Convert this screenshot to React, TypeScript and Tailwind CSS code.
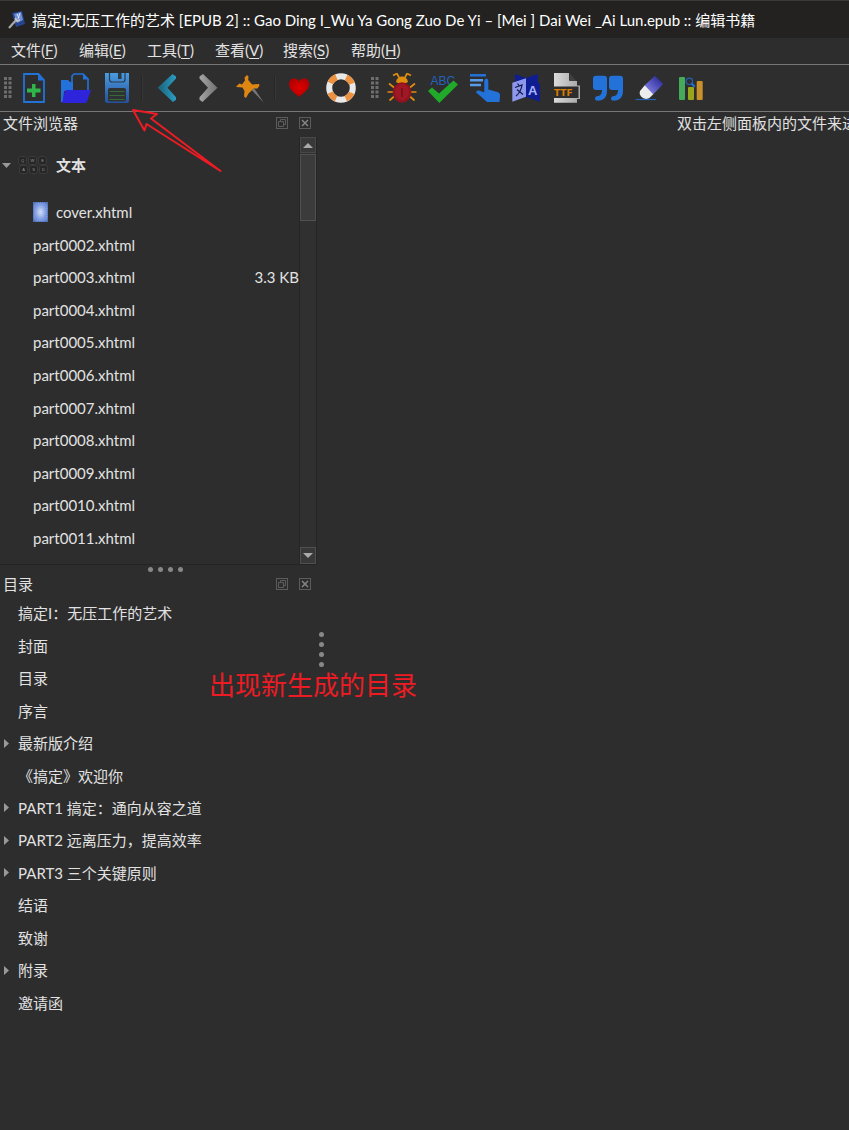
/**
 * Book editor window - menus, toolbars, file browser and table of contents
 */

import type { ReactNode } from 'react';

const MENUS = [
  { label: '文件', hotkey: 'F' },
  { label: '编辑', hotkey: 'E' },
  { label: '工具', hotkey: 'T' },
  { label: '查看', hotkey: 'V' },
  { label: '搜索', hotkey: 'S' },
  { label: '帮助', hotkey: 'H' },
];

const FILES = [
  { name: 'cover.xhtml', cover: true },
  { name: 'part0002.xhtml' },
  { name: 'part0003.xhtml', size: '3.3 KB' },
  { name: 'part0004.xhtml' },
  { name: 'part0005.xhtml' },
  { name: 'part0006.xhtml' },
  { name: 'part0007.xhtml' },
  { name: 'part0008.xhtml' },
  { name: 'part0009.xhtml' },
  { name: 'part0010.xhtml' },
  { name: 'part0011.xhtml' },
];

const TOC = [
  { title: '搞定I：无压工作的艺术' },
  { title: '封面' },
  { title: '目录' },
  { title: '序言' },
  { title: '最新版介绍', children: true },
  { title: '《搞定》欢迎你' },
  { title: 'PART1 搞定：通向从容之道', children: true },
  { title: 'PART2 远离压力，提高效率', children: true },
  { title: 'PART3 三个关键原则', children: true },
  { title: '结语' },
  { title: '致谢' },
  { title: '附录', children: true },
  { title: '邀请函' },
];

function Tool({ label, children }: { label: string; children: ReactNode }) {
  return (
    <button type="button" aria-label={label} className="h-[30px] w-[30px] shrink-0">
      <svg viewBox="0 0 30 30" className="block h-[30px] w-[30px]">
        {children}
      </svg>
    </button>
  );
}

function Grip() {
  return (
    <svg viewBox="0 0 8 22" className="h-[22px] w-2 shrink-0" fill="#6e6e6e">
      {[0, 4.5, 9, 13.5, 18].map((y) => (
        <g key={y}>
          <rect x="0" y={y} width="3" height="3" />
          <rect x="4.5" y={y} width="3" height="3" />
        </g>
      ))}
    </svg>
  );
}

function ToolSeparator() {
  return <div className="h-6 w-0.5 shrink-0 border-l border-[#262626] bg-[#373737]" />;
}

function PanelHeader({ title }: { title: string }) {
  return (
    <div className="flex h-[22px] items-center pr-1.5 pl-[3px]">
      <h2 className="flex-1 text-[15px]">{title}</h2>
      <button type="button" aria-label={`浮动 ${title}`} className="mr-[11px]">
        <svg viewBox="0 0 12 12" className="block h-3 w-3" fill="none" stroke="#5c5c5c">
          <rect x="0.5" y="0.5" width="11" height="11" />
          <path d="M4.5 4.5V2.5h5v5h-2M2.5 4.5h5v5h-5z" />
        </svg>
      </button>
      <button type="button" aria-label={`关闭 ${title}`}>
        <svg viewBox="0 0 12 12" className="block h-3 w-3" fill="none" stroke="#5c5c5c">
          <rect x="0.5" y="0.5" width="11" height="11" />
          <path d="M3 3l6 6M9 3l-6 6" stroke="#858585" strokeWidth="1.5" />
        </svg>
      </button>
    </div>
  );
}

function SplitterDots() {
  return (
    <>
      {Array.from({ length: 4 }).map((_, i) => (
        <span key={i} className="h-[5px] w-[5px] rounded-full bg-[#888]" />
      ))}
    </>
  );
}

function TitleBar() {
  return (
    <header className="flex h-[38px] items-center border-t border-[#3a3a3a] bg-[#232221] pl-2">
      <svg viewBox="0 0 18 18" className="mr-1.5 h-[18px] w-[18px] shrink-0">
        <path d="M4 2l10-2 3 13-9 3z" fill="#27458f" />
        <path d="M6 3l7-2 2 8-6 3z" fill="#6d8fd6" />
        <path d="M9 3l2 4M12 2l-2 6" stroke="#dbe4f7" strokeWidth="1" />
        <path d="M1 17L9 8" stroke="#a9a9a9" strokeWidth="2.2" />
        <path d="M7 7l2 3 3-1" fill="none" stroke="#c8c8c8" strokeWidth="1.5" />
      </svg>
      <h1 className="truncate text-[15px] text-white">
        搞定I:无压工作的艺术 [EPUB 2] :: Gao Ding I_Wu Ya Gong Zuo De Yi – [Mei ] Dai Wei _Ai Lun.epub :: 编辑书籍
      </h1>
    </header>
  );
}

function MenuBar() {
  return (
    <nav className="flex h-[26px] items-center pb-0.5 pl-[11px]">
      {MENUS.map((menu) => (
        <button key={menu.hotkey} type="button" className="w-[68px] text-left text-[15px] whitespace-nowrap">
          {menu.label}(<span className="underline underline-offset-2">{menu.hotkey}</span>)
        </button>
      ))}
    </nav>
  );
}

function Toolbars() {
  return (
    <div className="flex h-12 items-center border-y border-[#777] bg-[#2e2e2e] pl-1">
      <Grip />
      <div className="ml-[7px] flex w-[113px] shrink-0 justify-between">
        <Tool label="新建文件">
          <path d="M5 1h14.5l5.5 6v22H5z" fill="none" stroke="#2372d9" strokeWidth="1.8" />
          <path d="M19 1v6.5h6z" fill="#2372d9" />
          <path d="M13 11h3.5v4.5h5v4h-5V24H13v-4.500H8v-4h5z" fill="#2fb54a" />
        </Tool>
        <Tool label="打开书籍">
          <path d="M0 7h7l2 2h3v9H3l-1 11H0z" fill="#2372d9" />
          <path d="M11 18V3l2-2h9l5 5v12" fill="none" stroke="#2372d9" strokeWidth="1.6" />
          <path d="M22 0v6.5h6z" fill="#2372d9" />
          <path d="M5 17h25l-4 11.500q-.5 1.500-2 1.500H1l3-12z" fill="#2e24dc" />
        </Tool>
        <Tool label="保存">
          <defs>
            <linearGradient id="save" x1="0" y1="0" x2="0" y2="1">
              <stop offset="0" stopColor="#4a9ce0" />
              <stop offset="1" stopColor="#24509a" />
            </linearGradient>
          </defs>
          <path d="M3 0H27V28q0 2-2 2H5q-2 0-2-2z" fill="url(#save)" />
          <path d="M7.5 0v6.5q0 2.500 2.500 2.500h10.500q2.500 0 2.500-2.500V0" fill="none" stroke="#2b3a49" strokeWidth="1.2" />
          <rect x="16" y="0" width="3.5" height="6" fill="#2b3a49" />
          <rect x="6" y="15" width="18" height="13.5" rx="2" fill="#2e3234" />
          <path d="M7.500 18.500h15M7.500 22.500h15M7.500 26.500h15" stroke="#356b33" />
        </Tool>
      </div>
      <div className="flex w-5 shrink-0 justify-center">
        <ToolSeparator />
      </div>
      <div className="flex w-[113px] shrink-0 justify-between">
        <Tool label="后退">
          <defs>
            <linearGradient id="back">
              <stop offset="0" stopColor="#1b6276" />
              <stop offset="1" stopColor="#2b9cc4" />
            </linearGradient>
          </defs>
          <path d="M5.700 14.700L20.500 1l3.500 2.500v2l-8.500 9.200 8.500 9.500v2.500L21 29z" fill="url(#back)" />
        </Tool>
        <Tool label="前进">
          <defs>
            <linearGradient id="forward">
              <stop offset="0" stopColor="#a5a5a5" />
              <stop offset="1" stopColor="#707070" />
            </linearGradient>
          </defs>
          <path d="M23.500 14.700L9 1L5.500 3.500v2l8.500 9.200-8.500 9.500v2.500L8.500 29z" fill="url(#forward)" />
        </Tool>
        <Tool label="固定">
          <path d="M16.500 17l2.500-2 9.700 14.500z" fill="#777" />
          <path
            d="M12 2l1.500 1.500-.3 3.500 4 4.500 6.800-.5.500 1.500-2 3h-4l-5 5-2.500 4.500-2-1.500.5-5.500-2-3.500-6-.5v-1L4.500 10.500l2.500 1 3-4-.5-3z"
            fill="#dd8612"
          />
        </Tool>
      </div>
      <div className="flex w-[19px] shrink-0 justify-center">
        <ToolSeparator />
      </div>
      <div className="flex w-[72px] shrink-0 justify-between">
        <Tool label="捐助">
          <defs>
            <radialGradient id="heart">
              <stop offset="0" stopColor="#e00000" />
              <stop offset="1" stopColor="#b40000" />
            </radialGradient>
          </defs>
          <path d="M15 24C11 20 5 17 5 11c0-3.500 2.500-5.500 5-5.500 2.300 0 4 1.300 5 3 1-1.700 2.700-3 5-3 2.800 0 5.300 2 5.300 5.500C25.300 17 19 20 15 24z" fill="url(#heart)" />
        </Tool>
        <Tool label="用户手册">
          <circle cx="15" cy="15" r="11.8" fill="none" stroke="#e8e8e8" strokeWidth="6" />
          <circle
            cx="15"
            cy="15"
            r="11.8"
            fill="none"
            stroke="#ec9140"
            strokeWidth="6"
            strokeDasharray="8.5 10.035"
            strokeDashoffset="-5"
          />
        </Tool>
      </div>
      <div className="ml-[15px] shrink-0">
        <Grip />
      </div>
      <div className="ml-2 flex w-[319px] shrink-0 justify-between">
        <Tool label="检查书籍">
          <g fill="none" stroke="#df8d0c" strokeWidth="1.7">
            <path d="M6 2.500l4-2 2 4M24 2.500l-4-2-2 4" />
            <path d="M7 14.500L2 10.500M23 14.500L28 10.500M6 19H.5M24 19h5.500M7 23.500l-4.500 4M23 23.500l4.500 4" />
          </g>
          <path d="M9 9q1-5.500 6-5.500T21 9q-6 4-12 0z" fill="#df8d0c" />
          <ellipse cx="15" cy="19.5" rx="9.3" ry="10.3" fill="#8f1420" />
          <ellipse cx="15" cy="19" rx="7" ry="8" fill="#a01824" />
          <path d="M15 15v9" stroke="#5d1016" strokeWidth="1.2" />
        </Tool>
        <Tool label="拼写检查">
          <text x="2.5" y="11.5" fontSize="12" fill="#2463ba" fontFamily="Liberation Sans, sans-serif">
            ABC
          </text>
          <path d="M0 18l4-3.500 7 6L25.500 7.500l4.500 4L11.300 30z" fill="#21a929" />
        </Tool>
        <Tool label="目录编辑">
          <path d="M0 2.300h16" stroke="#2372d9" strokeWidth="2.5" />
          <path d="M0 7.300h13M0 12h11" stroke="#5a9be9" strokeWidth="2.5" />
          <path
            d="M16.300 5.500q2 0 2 2.500v8.500l9 2.500q3 1 2.700 3.500L29.500 29H17l-5.500-5-5.500-4.500q0-2.500 3-2l5.300 2V8q0-2.500 2-2.500z"
            fill="#2372d9"
          />
        </Tool>
        <Tool label="翻译">
          <path d="M4 1l11 4v19L4 22z" fill="#101d91" />
          <path d="M15 5l12-4v9l2 .5V28.700L15 24z" fill="#101d91" />
          <path d="M1.300 9.700L15 5.300v18.400L1.300 28.700z" fill="#8d98ec" />
          <path d="M4 14.500l7-2.500q-1 7-6 11M6 16.500l6 5M6.500 10.500l1.500 2" fill="none" stroke="#11194a" strokeWidth="1.2" />
          <text x="17" y="22" fontSize="13" fontWeight="700" fill="#a9b3ff" fontFamily="Liberation Sans, sans-serif">
            A
          </text>
        </Tool>
        <Tool label="管理字体">
          <defs>
            <linearGradient id="page">
              <stop offset="0" stopColor="#dadada" />
              <stop offset="1" stopColor="#a5a5a5" />
            </linearGradient>
          </defs>
          <path d="M2 0h15v7l1 1h7v4.500h3V26h-3v3.700H2z" fill="url(#page)" />
          <path d="M17.500 0l7 8h-7z" fill="#404040" />
          <rect x="2" y="13.500" width="24.500" height="11.500" fill="#2d2d2d" />
          <text x="2" y="22.5" fontSize="9" fontWeight="700" fill="#d97b00" fontFamily="DejaVu Sans, sans-serif">
            TTF
          </text>
        </Tool>
        <Tool label="智能标点">
          <path
            d="M3 2.700h8q3 0 3 3V18q0 9.500-9 9.700-3 0-3-2.200t3-2.500q4-.5 4-6H3q-3 0-3-3V5.700q0-3 3-3zM19 2.700h8q3 0 3 3V18q0 9.500-9 9.700-3 0-3-2.200t3-2.500q4-.5 4-6h-6q-3 0-3-3V5.700q0-3 3-3z"
            fill="#2372d9"
          />
        </Tool>
        <Tool label="移除未使用的样式">
          <defs>
            <linearGradient id="rubber" x1="0" y1="1" x2="1" y2="0">
              <stop offset="0.1" stopColor="#8484e6" />
              <stop offset="0.9" stopColor="#262596" />
            </linearGradient>
          </defs>
          <path d="M10 12l8.500 9-3.500 3.500Q12 27 8 25q-4.500-3-3-7z" fill="#ececec" />
          <path d="M20 2.700l8.300 8.300-10 10.200-8.700-8.900z" fill="url(#rubber)" />
          <path d="M.7 26.500H21" stroke="#2463ba" strokeWidth="1.2" />
        </Tool>
        <Tool label="报告">
          <rect x="3" y="4" width="6" height="23" rx="1" fill="#45ab5b" />
          <rect x="12" y="14" width="6" height="13" rx="1" fill="#99a51b" />
          <rect x="20.7" y="8" width="6" height="19" rx="1" fill="#ca9029" />
          <circle cx="13.3" cy="8.3" r="3.2" fill="none" stroke="#2463ba" strokeWidth="1.2" />
          <path d="M15.500 10.500l3.300 3.300" stroke="#2372d9" strokeWidth="2" />
        </Tool>
      </div>
    </div>
  );
}

function KeyboardIcon() {
  return (
    <svg viewBox="0 0 30 20" className="h-5 w-[30px] shrink-0" fontSize="4" fontFamily="Liberation Sans, sans-serif">
      {['Q', 'W', 'E', 'A', 'S', 'D'].map((key, i) => {
        const x = (i % 3) * 10 + (i > 2 ? 1 : 0);
        const y = i > 2 ? 10 : 1;
        return (
          <g key={key}>
            <rect x={x + 0.5} y={y + 0.5} width="8" height="8" rx="2" fill="#262626" stroke="#3c3c3c" />
            <text x={x + 4.5} y={y + 5.5} textAnchor="middle" fill="#999">
              {key}
            </text>
          </g>
        );
      })}
    </svg>
  );
}

function CoverIcon() {
  return (
    <svg viewBox="0 0 15 20" className="mr-2 h-5 w-[15px] shrink-0">
      <defs>
        <radialGradient id="cover">
          <stop offset="0.1" stopColor="#cbd6f6" />
          <stop offset="1" stopColor="#6f90dc" />
        </radialGradient>
      </defs>
      <rect width="15" height="20" fill="#5474b8" />
      <rect x="1" y="1" width="13" height="18" rx="4" fill="url(#cover)" stroke="#89a4e4" strokeDasharray="1 1" />
    </svg>
  );
}

function Scrollbar() {
  return (
    <div className="flex w-[18px] flex-col border-x border-[#252525] bg-[#303030]">
      <button type="button" aria-label="向上滚动" className="flex h-4 items-center justify-center border border-[#484848] bg-[#383838]">
        <svg viewBox="0 0 10 5" className="h-[5px] w-2.5" fill="#aaa">
          <path d="M5 0l5 5H0z" />
        </svg>
      </button>
      <div className="mt-px h-[67px] border border-[#505050] bg-[#3b3b3b]" />
      <div className="flex-1" />
      <button type="button" aria-label="向下滚动" className="flex h-[17px] items-center justify-center border border-[#505050] bg-[#383838]">
        <svg viewBox="0 0 10 5" className="h-[5px] w-2.5" fill="#aaa">
          <path d="M5 5L0 0h10z" />
        </svg>
      </button>
    </div>
  );
}

function FileBrowser() {
  return (
    <section>
      <PanelHeader title="文件浏览器" />
      <div className="mt-[3px] flex h-[428px] border-b border-[#232323]">
        <div className="min-w-0 flex-1">
          <button type="button" className="mb-[3px] flex h-14 w-full items-center pl-0.5">
            <svg viewBox="0 0 9 5" className="mr-[7px] h-[5px] w-[9px]" fill="#999">
              <path d="M0 0h9L4.500 5z" />
            </svg>
            <KeyboardIcon />
            <span className="ml-2 text-[15px] font-bold">文本</span>
          </button>
          <ul className="grid h-[358px] auto-rows-fr">
            {FILES.map((file) => (
              <li key={file.name} className="flex items-center pl-[33px] text-[15px]">
                {file.cover && <CoverIcon />}
                <button type="button">{file.name}</button>
                {file.size && <span className="ml-auto">{file.size}</span>}
              </li>
            ))}
          </ul>
        </div>
        <Scrollbar />
      </div>
    </section>
  );
}

function TableOfContents() {
  return (
    <section>
      <PanelHeader title="目录" />
      <ul className="mt-0.5 grid h-[422px] auto-rows-fr">
        {TOC.map((entry) => (
          <li key={entry.title} className="flex items-center text-[15px]">
            <span className="w-[18px] shrink-0 pl-1">
              {entry.children && (
                <svg viewBox="0 0 5 9" className="block h-[9px] w-[5px]" fill="#999">
                  <path d="M0 0l5 4.500L0 9z" />
                </svg>
              )}
            </span>
            <button type="button">{entry.title}</button>
          </li>
        ))}
      </ul>
    </section>
  );
}

export default function App() {
  return (
    <div className="relative flex min-h-screen flex-col overflow-hidden bg-[#2d2d2d] font-[Lato,'Noto_Sans_CJK_SC',sans-serif] leading-5 text-[#e2e2e2]">
      <TitleBar />
      <MenuBar />
      <Toolbars />
      <div className="flex flex-1">
        <aside className="w-[317px] shrink-0">
          <FileBrowser />
          <div className="flex h-2 items-center justify-center gap-[5px] pl-[14px]">
            <SplitterDots />
          </div>
          <TableOfContents />
        </aside>
        <div className="flex w-[9px] shrink-0 flex-col items-center gap-[5px] pt-[520px]">
          <SplitterDots />
        </div>
        <main className="min-w-0 flex-1 overflow-hidden pt-px pl-[351px]">
          <p className="text-[15px] whitespace-nowrap">双击左侧面板内的文件来进</p>
        </main>
      </div>

      {/* Callout drawn over the window */}
      <svg viewBox="0 0 90 64" className="absolute top-[108px] left-[132px] h-16 w-[90px]" fill="none" stroke="#ed1c24" strokeWidth="2" strokeLinejoin="round">
        <path d="M1 2l24 4-6 4.500L88.500 63 14.500 16l-2 6.500z" />
      </svg>
      <p className="absolute top-[669px] left-[209px] text-[26px] leading-8 text-[#ed1c24]">出现新生成的目录</p>
    </div>
  );
}
